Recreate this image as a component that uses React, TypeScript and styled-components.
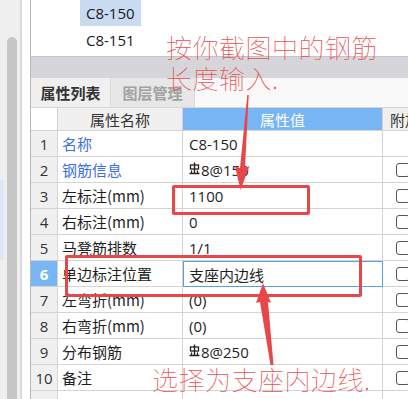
import styled, { createGlobalStyle } from 'styled-components'

const Global = createGlobalStyle`
  html, body {
    margin: 0;
    padding: 0;
    background: #ffffff;
    overflow: hidden;
  }
`

type Row = {
  no: number
  name: string
  value: string
  blue?: boolean
  steel?: boolean
  check?: boolean
  active?: boolean
}

const rows: Row[] = [
  { no: 1, name: '名称', value: 'C8-150', blue: true },
  { no: 2, name: '钢筋信息', value: '8@150', blue: true, steel: true, check: true },
  { no: 3, name: '左标注(mm)', value: '1100', check: true },
  { no: 4, name: '右标注(mm)', value: '0', check: true },
  { no: 5, name: '马凳筋排数', value: '1/1', check: true },
  { no: 6, name: '单边标注位置', value: '支座内边线', check: true, active: true },
  { no: 7, name: '左弯折(mm)', value: '(0)', check: true },
  { no: 8, name: '右弯折(mm)', value: '(0)', check: true },
  { no: 9, name: '分布钢筋', value: '8@250', steel: true, check: true },
  { no: 10, name: '备注', value: '', check: true },
]

const SteelMark = () => (
  <svg width="11" height="13" viewBox="0 0 11 13" style={{ marginRight: 1, marginBottom: 3 }}>
    <path d="M5.5 0.5 V12" stroke="#222" strokeWidth="1.4" />
    <rect x="1.5" y="3" width="8" height="4" fill="none" stroke="#222" strokeWidth="1.3" />
    <path d="M0.5 11.5 H10.5 M2.5 8.5 V11.5 M8.5 8.5 V11.5" stroke="#222" strokeWidth="1.3" />
  </svg>
)

const App = () => {
  return (
    <>
      <Global />
      <Page>
        <Side>
          <Thumb />
          <SelMark />
        </Side>
        <Sep />
        <Main>
          <TopList>
            <ListItem selected>C8-150</ListItem>
            <ListItem>C8-151</ListItem>
          </TopList>
          <GrayBar />
          <Tabs>
            <Tab active>属性列表</Tab>
            <Tab>图层管理</Tab>
          </Tabs>
          <Grid>
            <HeadCell />
            <HeadCell>属性名称</HeadCell>
            <HeadCell blue>属性值</HeadCell>
            <HeadCell>附加</HeadCell>
            {rows.map((r) => (
              <Line key={r.no}>
                <NoCell active={r.active}>{r.no}</NoCell>
                <NameCell blue={r.blue}>{r.name}</NameCell>
                <ValueCell active={r.active}>
                  {r.steel && <SteelMark />}
                  {r.value}
                </ValueCell>
                <CheckCell>{r.check && <Box />}</CheckCell>
              </Line>
            ))}
            <Line>
              <NoCell />
              <NameCell>
                <Plus />
              </NameCell>
              <ValueCell />
              <CheckCell />
            </Line>
          </Grid>
        </Main>

        <Note top={31} left={166}>
          按你截图中的钢筋
          <br />
          长度输入.
        </Note>
        <Note top={363} left={152}>选择为支座内边线.</Note>
        <RedBox style={{ left: 172, top: 185, width: 132, height: 24 }} />
        <RedBox style={{ left: 65, top: 255, width: 291, height: 36 }} />
        <Arrows width="408" height="399" viewBox="0 0 408 399">
          <polygon points="247.3,95 248.7,95 245,168 249.5,166 240.5,190 235,166 240,168" fill="#e8474a" />
          <polygon points="263,283 271,303 268,302 273.5,365 270.5,365 260,302 256,303" fill="#e8474a" />
        </Arrows>
      </Page>
    </>
  )
}

const Page = styled.div`
  position: relative;
  display: flex;
  width: 408px;
  height: 399px;
  overflow: hidden;
  background: #ffffff;
  font-family: 'Noto Sans CJK SC', 'Noto Sans', sans-serif;
`

const Side = styled.div`
  position: relative;
  width: 22px;
  flex: none;
  background: #efefef;
  border-right: 2px solid #dadada;
  padding-top: 37px;
  box-sizing: border-box;
`

const Thumb = styled.div`
  margin-left: 7px;
  width: 10px;
  height: 380px;
  border-radius: 5px;
  background: #c6c6c6;
`

const SelMark = styled.div`
  position: absolute;
  left: 0;
  top: 180px;
  width: 4px;
  height: 80px;
  background: #dde8f6;
`

const Sep = styled.div`
  width: 8px;
  flex: none;
  background: #ffffff;
`

const Main = styled.div`
  flex: 1;
  display: flex;
  flex-direction: column;
  border-left: 1px solid #b8b8b8;
  min-width: 0;
  & > * {
    flex: none;
  }
`

const TopList = styled.div`
  height: 57px;
  box-sizing: border-box;
  border-bottom: 1px solid #c4c4c4;
  padding-left: 49px;
  display: flex;
  flex-direction: column;
  align-items: flex-start;
  gap: 1px;
`

const ListItem = styled.div<{ selected?: boolean }>`
  height: 26px;
  line-height: 26px;
  padding: 0 6px;
  font-family: 'Open Sans', 'Noto Sans', sans-serif;
  font-size: 15px;
  color: #1a1a1a;
  background: ${(p) => (p.selected ? '#c9daf1' : 'transparent')};
`

const GrayBar = styled.div`
  height: 21px;
  background: #d6d6da;
`

const Tabs = styled.div`
  height: 29px;
  display: flex;
  background: #f9f9f9;
`

const Tab = styled.div<{ active?: boolean }>`
  width: ${(p) => (p.active ? 79 : 83)}px;
  border-right: 1px solid #dcdcdc;
  display: flex;
  align-items: center;
  justify-content: center;
  font-size: 15px;
  font-weight: bold;
  color: ${(p) => (p.active ? '#333333' : '#a2a2a2')};
  background: ${(p) => (p.active ? '#f0f0f0' : '#e7e7e7')};
`

const Grid = styled.div`
  display: grid;
  grid-template-columns: 27px 125px 200px 40px;
  grid-auto-rows: 26px;
  grid-template-rows: 23px;
  border-top: 1px solid #d6d6d6;
  font-size: 15px;
  color: #1e1e1e;
`

const HeadCell = styled.div<{ blue?: boolean }>`
  display: flex;
  align-items: center;
  justify-content: center;
  font-size: 15px;
  box-sizing: border-box;
  border-right: 1px solid #d4d4d4;
  border-bottom: 1px solid #d4d4d4;
  background: ${(p) => (p.blue ? '#78b5f5' : '#f0f0f0')};
  color: ${(p) => (p.blue ? '#ffffff' : '#333333')};
  &:first-child {
    background: #ffffff;
  }
  &:nth-child(4) {
    justify-content: flex-start;
    padding-left: 7px;
  }
`

const Line = styled.div`
  display: contents;
`

const Cell = styled.div`
  display: flex;
  align-items: center;
  box-sizing: border-box;
  border-right: 1px solid #d4d4d4;
  border-bottom: 1px solid #d4d4d4;
  white-space: nowrap;
`

const NoCell = styled(Cell)<{ active?: boolean }>`
  justify-content: center;
  font-family: 'Open Sans', 'Noto Sans', sans-serif;
  font-size: 15px;
  background: ${(p) => (p.active ? '#78b5f5' : '#f0f0f0')};
  color: ${(p) => (p.active ? '#ffffff' : '#333333')};
  font-weight: ${(p) => (p.active ? 'bold' : 'normal')};
`

const NameCell = styled(Cell)<{ blue?: boolean }>`
  padding-left: 4px;
  color: ${(p) => (p.blue ? '#3a6fe6' : '#1e1e1e')};
`

const ValueCell = styled(Cell)<{ active?: boolean }>`
  padding-left: ${(p) => (p.active ? 5 : 6)}px;
  font-family: 'Open Sans', 'Noto Sans CJK SC', sans-serif;
  border: ${(p) => (p.active ? '1px solid #5a9ee8' : 'none')};
  border-right: 1px solid ${(p) => (p.active ? '#5a9ee8' : '#d4d4d4')};
  border-bottom: 1px solid ${(p) => (p.active ? '#5a9ee8' : '#d4d4d4')};
`

const CheckCell = styled(Cell)`
  padding-left: 13px;
  border-right: none;
`

const Box = styled.div`
  width: 14px;
  height: 14px;
  box-sizing: border-box;
  border: 1px solid #555555;
  border-radius: 3px;
  background: #ffffff;
`

const Plus = styled.div`
  width: 8px;
  height: 8px;
  margin-top: 12px;
  margin-left: 3px;
  border: 1px solid #777777;
`

const Note = styled.div<{ top: number; left: number }>`
  position: absolute;
  top: ${(p) => p.top}px;
  left: ${(p) => p.left}px;
  font-family: 'Noto Sans CJK SC', sans-serif;
  font-weight: 100;
  font-size: 26px;
  line-height: 31px;
  letter-spacing: 0.5px;
  color: #ea5053;
  white-space: nowrap;
  pointer-events: none;
`

const RedBox = styled.div`
  position: absolute;
  border: 3px solid #e8474a;
  border-radius: 2px;
  pointer-events: none;
`

const Arrows = styled.svg`
  position: absolute;
  left: 0;
  top: 0;
  pointer-events: none;
`

export default App
